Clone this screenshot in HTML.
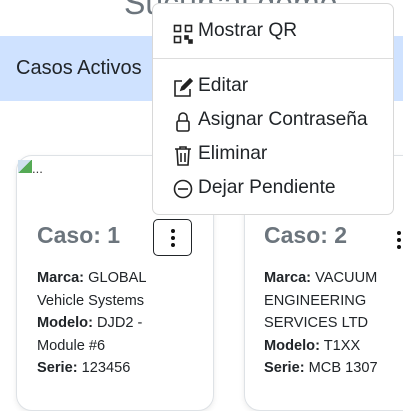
<!DOCTYPE html><html><head><style>
body{margin:0;width:403px;height:411px;overflow:hidden;background:#fff;font-family:"Liberation Sans",sans-serif;position:relative}
.t{position:absolute;left:124px;top:-15px;font-size:32px;color:#6c757d;white-space:nowrap}
.band{position:absolute;left:0;top:36px;width:403px;height:65px;background:#cfe2ff}
.card{position:absolute;top:155px;width:196px;height:254px;border:1px solid #dee2e6;border-radius:16px;background:#fff;box-shadow:0 2px 6px rgba(0,0,0,.08)}
.h{position:absolute;top:66px;font-size:23px;font-weight:bold;color:#6c757d}
.info{position:absolute;top:111px;font-size:14.6px;line-height:22.5px;color:#212529;width:160px}
.btn{position:absolute;left:136px;top:63px;width:37px;height:35px;border:1px solid #212529;border-radius:5px}
.dots{position:absolute;width:4px;height:4px;background:#111;border-radius:50%}
.menu{position:absolute;left:152px;top:3px;width:240px;height:210px;border:1px solid #d8d8d8;border-radius:7px;background:#fff}
.it{position:absolute;left:45px;font-size:19.2px;color:#212529}
.ic{position:absolute;left:20px}
</style></head><body>
<div class="t">Sucursal demo</div>
<div class="band"></div><div style="position:absolute;left:16px;top:57px;font-size:20px;color:#212529">Casos Activos</div>
<div class="card" style="left:16px">
<div style="position:absolute;left:1px;top:4px;font-size:13px;color:#333"><span style="display:inline-block;width:14px;height:13px;background:linear-gradient(135deg,#cfe0ee 50%,#5a5 50%)"></span>...</div>
<div class="h" style="left:20px">Caso: 1</div>
<div class="btn"><div class="dots" style="left:17px;top:9px"></div><div class="dots" style="left:17px;top:16px"></div><div class="dots" style="left:17px;top:23px"></div></div>
<div class="info" style="left:20px"><b>Marca:</b> GLOBAL<br>Vehicle Systems<br><b>Modelo:</b> DJD2 -<br>Module #6<br><b>Serie:</b> 123456</div>
</div>
<div class="card" style="left:244px">
<div class="h" style="left:19px">Caso: 2</div>
<div class="dots" style="left:152px;top:75px"></div><div class="dots" style="left:152px;top:82px"></div><div class="dots" style="left:152px;top:89px"></div>
<div class="info" style="left:19px"><b>Marca:</b> VACUUM<br>ENGINEERING<br>SERVICES LTD<br><b>Modelo:</b> T1XX<br><b>Serie:</b> MCB 1307</div>
</div>
<div class="menu">
<svg class="ic" style="top:20px" width="20" height="20" viewBox="0 0 20 20" fill="none" stroke="#222" stroke-width="1.6"><rect x="1.5" y="1.5" width="6" height="6"/><rect x="12.5" y="1.5" width="6" height="6"/><rect x="1.5" y="12.5" width="6" height="6"/><rect x="12" y="12" width="3" height="3" fill="#222"/><rect x="16" y="16" width="3" height="3" fill="#222"/></svg>
<div class="it" style="top:16px">Mostrar QR</div>
<div style="position:absolute;left:0;right:0;top:54px;border-top:1px solid #ddd"></div>
<svg class="ic" style="top:74px" width="20" height="20" viewBox="0 0 20 20" fill="none" stroke="#222" stroke-width="1.6"><path d="M9 3H2v15h15v-7"/><path d="M8 12l1-3 8-8 2 2-8 8z" fill="#222"/></svg>
<div class="it" style="top:71px">Editar</div>
<svg class="ic" style="top:107px" width="20" height="22" viewBox="0 0 20 22" fill="none" stroke="#222" stroke-width="1.6"><path d="M6 10V6a4 4 0 0 1 8 0v4"/><rect x="4" y="10" width="12" height="10" rx="1.5"/></svg>
<div class="it" style="top:105px">Asignar Contraseña</div>
<svg class="ic" style="top:141px" width="20" height="22" viewBox="0 0 20 22" fill="none" stroke="#222" stroke-width="1.6"><path d="M2 4h16M7 4V2h6v2M4 4l1 16h10l1-16M8 8v9M12 8v9"/></svg>
<div class="it" style="top:139px">Eliminar</div>
<svg class="ic" style="top:175px" width="20" height="20" viewBox="0 0 20 20" fill="none" stroke="#222" stroke-width="1.6"><circle cx="10" cy="10" r="8.5"/><path d="M5 10h10"/></svg>
<div class="it" style="top:173px">Dejar Pendiente</div>
</div>
</body></html>
